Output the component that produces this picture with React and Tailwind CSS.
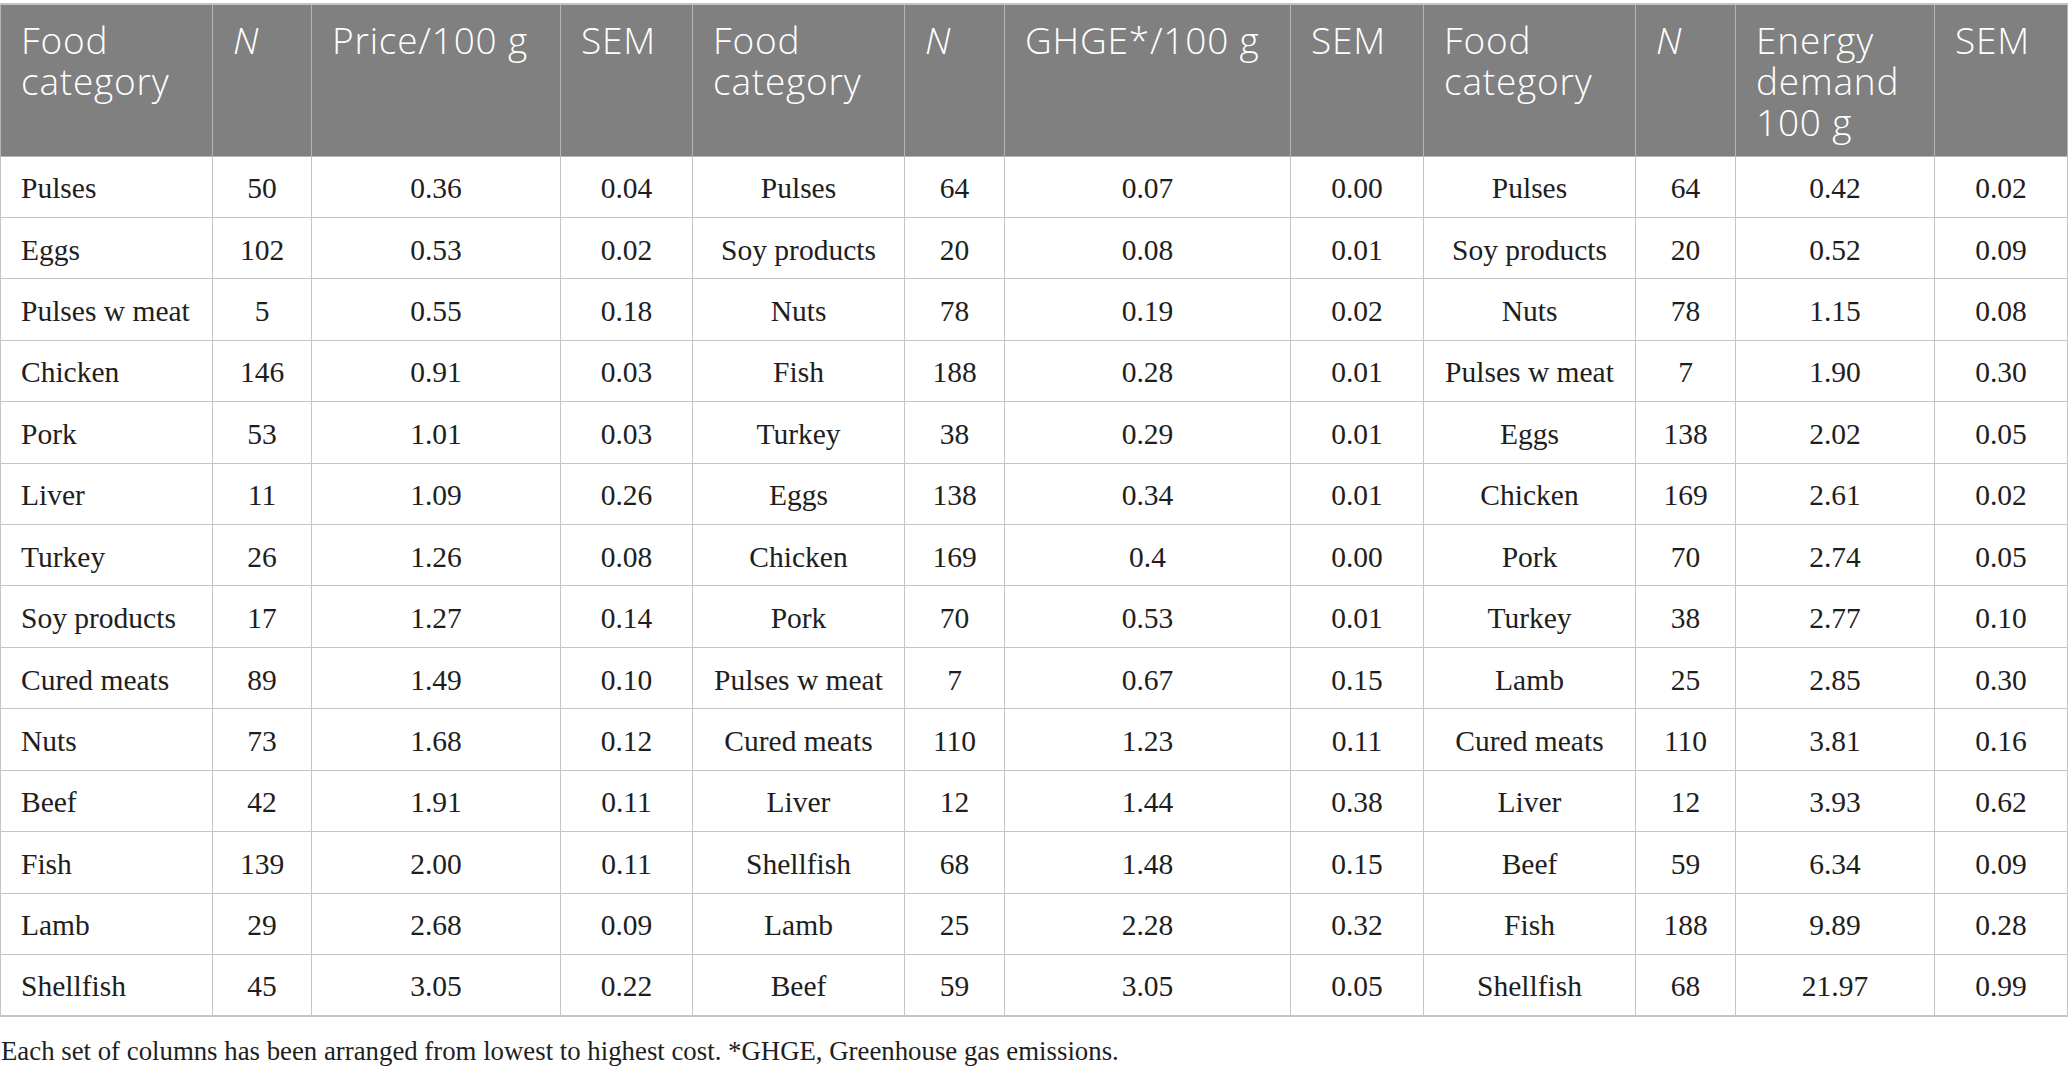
import React from "react";

const widths = [212, 99, 249, 132, 212, 100, 286, 133, 212, 100, 199, 133];

const headers = [
  "Food category",
  "N",
  "Price/100 g",
  "SEM",
  "Food category",
  "N",
  "GHGE*/100 g",
  "SEM",
  "Food category",
  "N",
  "Energy demand 100 g",
  "SEM",
];

const rows = [
  ["Pulses", "50", "0.36", "0.04", "Pulses", "64", "0.07", "0.00", "Pulses", "64", "0.42", "0.02"],
  ["Eggs", "102", "0.53", "0.02", "Soy products", "20", "0.08", "0.01", "Soy products", "20", "0.52", "0.09"],
  ["Pulses w meat", "5", "0.55", "0.18", "Nuts", "78", "0.19", "0.02", "Nuts", "78", "1.15", "0.08"],
  ["Chicken", "146", "0.91", "0.03", "Fish", "188", "0.28", "0.01", "Pulses w meat", "7", "1.90", "0.30"],
  ["Pork", "53", "1.01", "0.03", "Turkey", "38", "0.29", "0.01", "Eggs", "138", "2.02", "0.05"],
  ["Liver", "11", "1.09", "0.26", "Eggs", "138", "0.34", "0.01", "Chicken", "169", "2.61", "0.02"],
  ["Turkey", "26", "1.26", "0.08", "Chicken", "169", "0.4", "0.00", "Pork", "70", "2.74", "0.05"],
  ["Soy products", "17", "1.27", "0.14", "Pork", "70", "0.53", "0.01", "Turkey", "38", "2.77", "0.10"],
  ["Cured meats", "89", "1.49", "0.10", "Pulses w meat", "7", "0.67", "0.15", "Lamb", "25", "2.85", "0.30"],
  ["Nuts", "73", "1.68", "0.12", "Cured meats", "110", "1.23", "0.11", "Cured meats", "110", "3.81", "0.16"],
  ["Beef", "42", "1.91", "0.11", "Liver", "12", "1.44", "0.38", "Liver", "12", "3.93", "0.62"],
  ["Fish", "139", "2.00", "0.11", "Shellfish", "68", "1.48", "0.15", "Beef", "59", "6.34", "0.09"],
  ["Lamb", "29", "2.68", "0.09", "Lamb", "25", "2.28", "0.32", "Fish", "188", "9.89", "0.28"],
  ["Shellfish", "45", "3.05", "0.22", "Beef", "59", "3.05", "0.05", "Shellfish", "68", "21.97", "0.99"],
];

export default function App() {
  return (
    <div className="w-[2068px] h-[1070px] bg-white overflow-hidden pt-[3px]">
      <table
        className="table-fixed border-collapse w-[2067px] border-y-2 border-l border-r border-[#c4c4c4]"
      >
        <colgroup>
          {widths.map((w, i) => (
            <col key={i} style={{ width: w }} />
          ))}
        </colgroup>
        <thead>
          <tr className="bg-[#808080]">
            {headers.map((h, i) => (
              <th
                key={i}
                className="h-[152px] align-top text-left font-light text-white border border-[#b4b4b4] pl-[20px] pr-[6px] pt-[14px] text-[37px] tracking-[0.8px] leading-[41px] font-['Open_Sans',sans-serif]"
              >
                {h === "N" ? <span className="italic">N</span> : h}
              </th>
            ))}
          </tr>
        </thead>
        <tbody>
          {rows.map((r, ri) => (
            <tr key={ri}>
              {r.map((c, ci) => (
                <td
                  key={ci}
                  className={
                    "h-[61.43px] p-0 pt-[3px] align-middle border border-[#c4c4c4] text-[#1e1e1e] text-[29.5px] leading-[32px] font-['Liberation_Serif',serif] " +
                    (ci === 0 ? "text-left pl-[20px]" : "text-center")
                  }
                >
                  {c}
                </td>
              ))}
            </tr>
          ))}
        </tbody>
      </table>
      <p className="mt-[19px] pl-[1px] text-[26.8px] leading-[30px] text-[#1e1e1e] font-['Liberation_Serif',serif]">
        Each set of columns has been arranged from lowest to highest cost. *GHGE, Greenhouse gas emissions.
      </p>
    </div>
  );
}
